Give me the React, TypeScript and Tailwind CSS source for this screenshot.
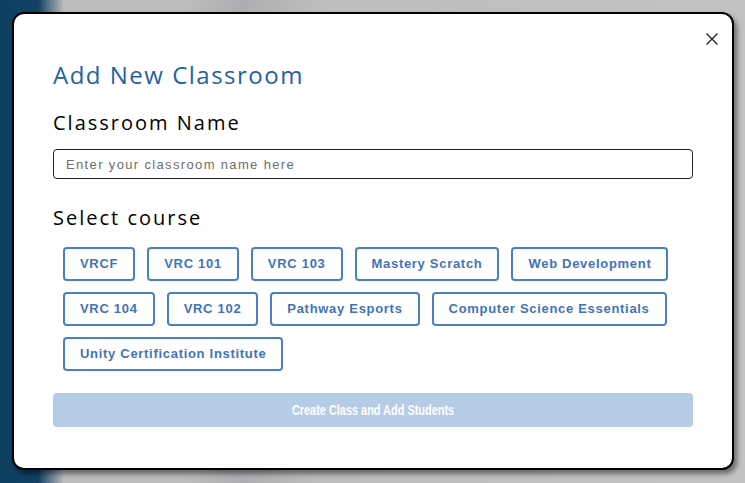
const courses = [
  "VRCF",
  "VRC 101",
  "VRC 103",
  "Mastery Scratch",
  "Web Development",
  "VRC 104",
  "VRC 102",
  "Pathway Esports",
  "Computer Science Essentials",
  "Unity Certification Institute",
];

export default function App() {
  return (
    <div className="relative h-[483px] w-full overflow-hidden bg-[linear-gradient(to_right,#0f3f60_0px,#114163_38px,#bcbcbc_64px,#bdbdbd_180px,#aeaeb2_240px,#bdbdbd_320px,#c2c2c2_745px)]">
      {/* modal */}
      <div className="absolute left-[12px] top-[12px] h-[458px] w-[722px] rounded-[12px] border-2 border-black bg-white px-[39px] pt-[46px] shadow-[3px_4px_5px_rgba(0,0,0,0.45)]">
        <button className="absolute right-[14px] top-[19px] flex h-[12px] w-[12px] items-center justify-center text-[#222]">
          <svg width="12" height="12" viewBox="0 0 12 12" fill="none" stroke="currentColor" strokeWidth="1.4">
            <path d="M0.5 0.5 L11.5 11.5 M11.5 0.5 L0.5 11.5" />
          </svg>
        </button>

        <h2 className="font-['Open_Sans',sans-serif] text-[24px] leading-[30px] font-normal tracking-[1.5px] text-[#1f62a3]">
          Add New Classroom
        </h2>

        <p className="mt-[20px] font-['Open_Sans',sans-serif] text-[20px] leading-[26px] tracking-[2px] text-black">
          Classroom Name
        </p>
        <input
          placeholder="Enter your classroom name here"
          className="mt-[13px] block h-[30px] w-full rounded-[4px] border border-[#222] px-[12px] font-['Liberation_Sans',sans-serif] text-[13px] tracking-[1.35px] placeholder:text-[#6d6d6d] outline-none"
        />

        <p className="mt-[26px] font-['Open_Sans',sans-serif] text-[20px] leading-[26px] tracking-[2px] text-black">
          Select course
        </p>
        <div className="mt-[16px] flex flex-wrap gap-x-[12px] gap-y-[11px] pl-[10px]">
          {courses.map((c) => (
            <button
              key={c}
              className="h-[34px] rounded-[4px] border-2 border-[#4a7fc2] px-[15px] font-['Liberation_Sans',sans-serif] text-[13px] font-bold tracking-[0.7px] text-[#3f74b8]"
            >
              {c}
            </button>
          ))}
        </div>

        <button
          disabled
          className="mt-[22px] flex h-[34px] w-full items-center justify-center rounded-[4px] bg-[#b6cbe6] font-['Liberation_Sans',sans-serif] text-[14px] font-bold text-white"
        >
          <span className="inline-block scale-x-[0.78] whitespace-nowrap">Create Class and Add Students</span>
        </button>
      </div>
    </div>
  );
}
